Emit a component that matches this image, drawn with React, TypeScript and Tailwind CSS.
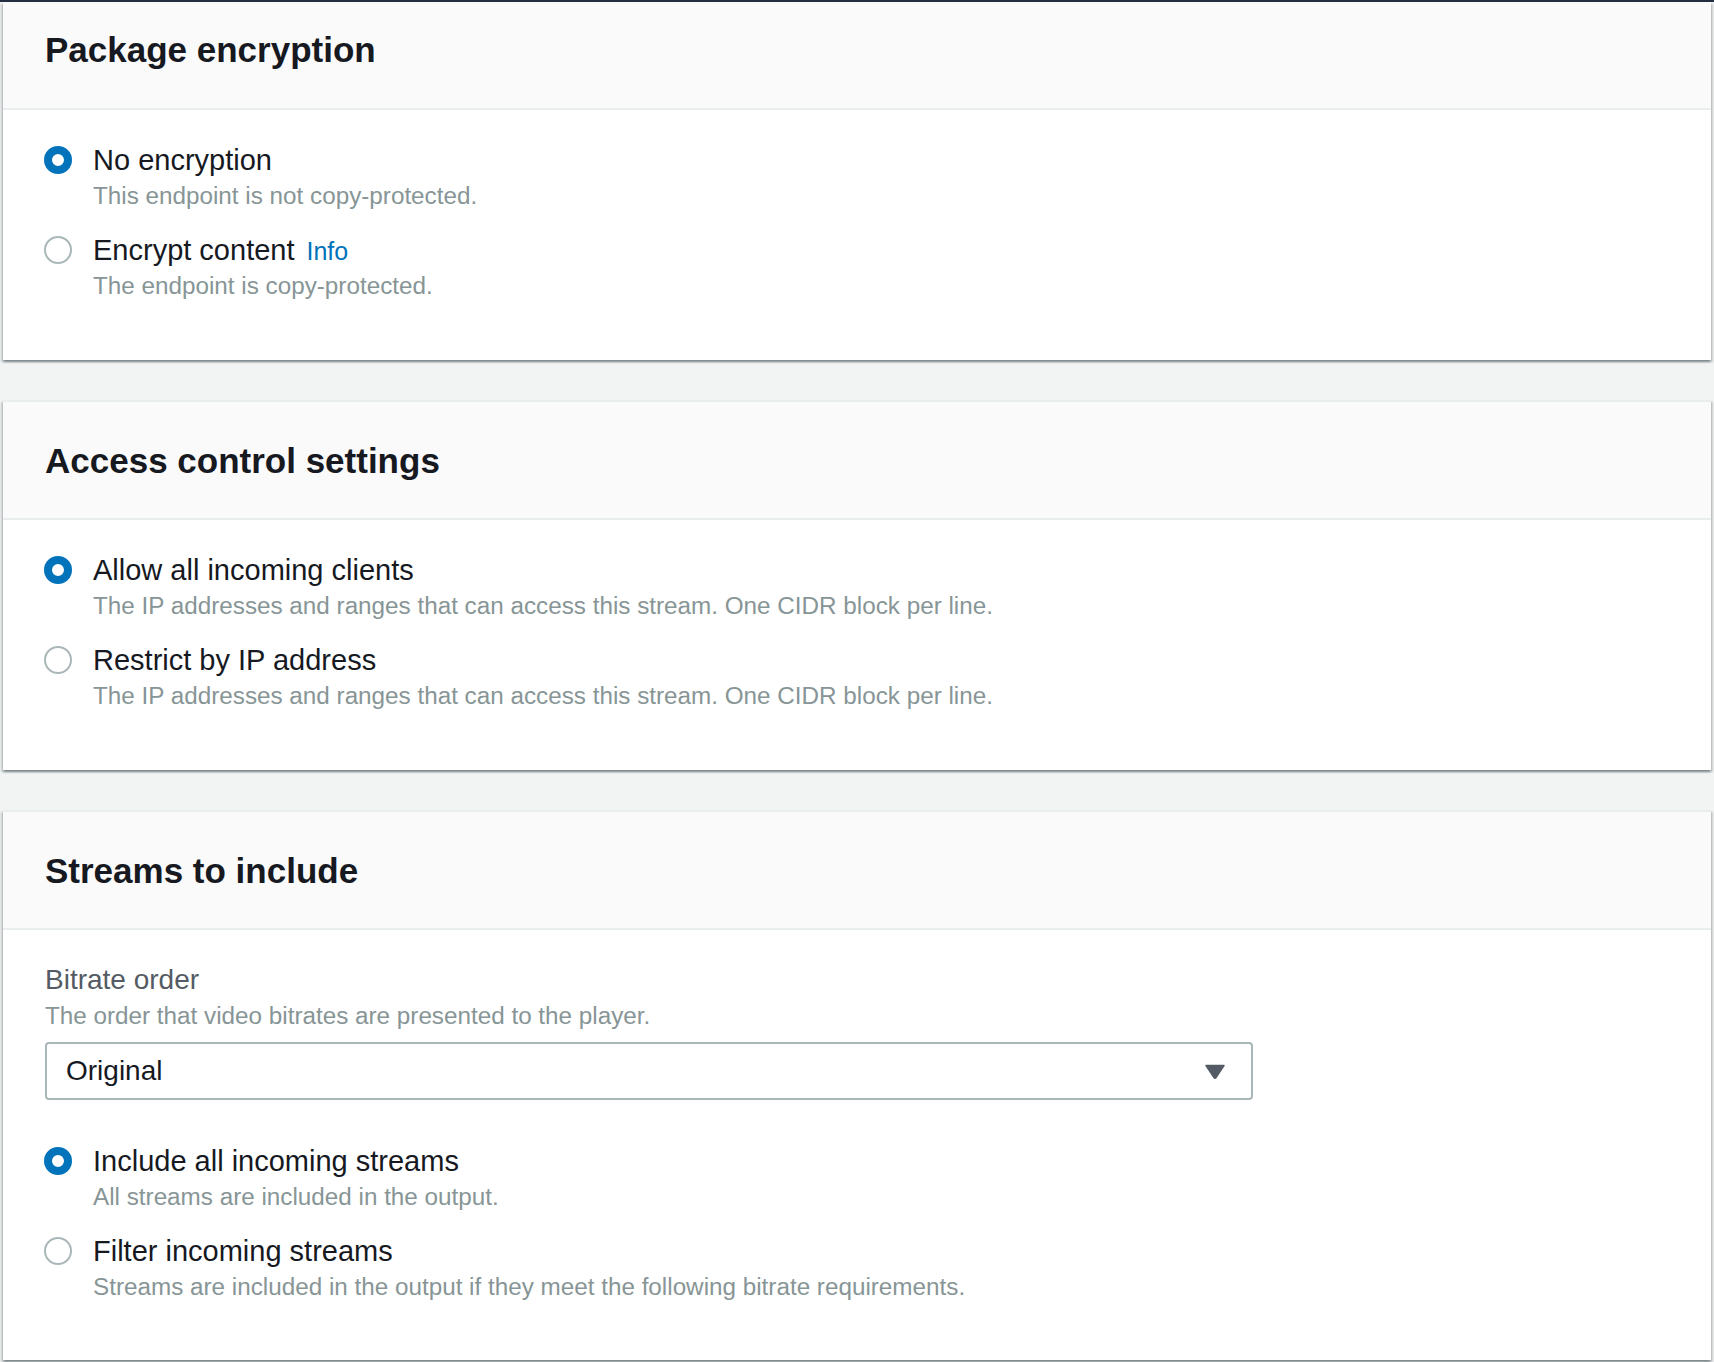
import React, { useState } from "react";

const font = { fontFamily: '"Liberation Sans", Arial, sans-serif' };

type Option = { value: string; label: string; description: string; info?: boolean };

function Radio({ checked }: { checked: boolean }) {
  return checked ? (
    <span className="mt-[6px] block h-[28px] w-[28px] shrink-0 rounded-full border-[8px] border-[#0073bb] bg-white" />
  ) : (
    <span className="mt-[6px] block h-[28px] w-[28px] shrink-0 rounded-full border-2 border-[#aab7b8] bg-white" />
  );
}

function RadioGroup({ options, initial }: { options: Option[]; initial: string }) {
  const [value, setValue] = useState(initial);
  return (
    <div className="flex flex-col gap-[18px]">
      {options.map((o) => (
        <label key={o.value} className="flex cursor-pointer items-start gap-[21px]" onClick={() => setValue(o.value)}>
          <Radio checked={value === o.value} />
          <div className="flex flex-col">
            <div className="flex h-[40px] items-baseline gap-[12px] text-[29px] leading-[40px] text-[#16191f]">
              <span>{o.label}</span>
              {o.info && <a className="text-[25px] text-[#0073bb]">Info</a>}
            </div>
            <div className="text-[24.25px] leading-[32px] text-[#879596]">{o.description}</div>
          </div>
        </label>
      ))}
    </div>
  );
}

function Card({ title, clipped, children }: { title: string; clipped?: boolean; children: React.ReactNode }) {
  return (
    <section
      className={
        "bg-white shadow-[0_2px_2px_0_rgba(0,28,36,0.3),2px_2px_2px_0_rgba(0,28,36,0.15),-2px_2px_2px_0_rgba(0,28,36,0.15)] " +
        (clipped ? "" : "border-t-2 border-[#eaeded]")
      }
    >
      <div
        className={
          "flex items-center border-b-2 border-[#eaeded] bg-[#fafafa] pl-[42px] " +
          (clipped ? "h-[108px] pb-[10px]" : "h-[118px] pt-[2px]")
        }
      >
        <h2 className="text-[35px] font-bold leading-[44px] text-[#16191f]">{title}</h2>
      </div>
      {children}
    </section>
  );
}

export default function App() {
  return (
    <div style={font} className="min-h-[1362px] bg-[#f2f3f3]">
      <div className="h-[2px] bg-[#232f3e]" />
      <div className="flex flex-col gap-[40px] px-[3px] pb-[2px]">
        <Card title="Package encryption" clipped>
          <div className="pl-[41px] pt-[30px] pb-[58px]">
            <RadioGroup
              initial="none"
              options={[
                { value: "none", label: "No encryption", description: "This endpoint is not copy-protected." },
                { value: "encrypt", label: "Encrypt content", description: "The endpoint is copy-protected.", info: true },
              ]}
            />
          </div>
        </Card>

        <Card title="Access control settings">
          <div className="pl-[41px] pt-[30px] pb-[58px]">
            <RadioGroup
              initial="all"
              options={[
                {
                  value: "all",
                  label: "Allow all incoming clients",
                  description: "The IP addresses and ranges that can access this stream. One CIDR block per line.",
                },
                {
                  value: "ip",
                  label: "Restrict by IP address",
                  description: "The IP addresses and ranges that can access this stream. One CIDR block per line.",
                },
              ]}
            />
          </div>
        </Card>

        <Card title="Streams to include">
          <div className="pl-[42px] pt-[30px] pb-[57px]">
            <div className="text-[28px] leading-[40px] text-[#545b64]">Bitrate order</div>
            <div className="text-[24.25px] leading-[32px] text-[#879596]">The order that video bitrates are presented to the player.</div>
            <div className="mt-[10px] flex h-[58px] w-[1208px] items-center justify-between rounded-[4px] border-2 border-[#aab7b8] bg-white pl-[19px] pr-[26px]">
              <span className="text-[28px] text-[#16191f]">Original</span>
              <svg width="20" height="15" viewBox="0 0 20 15">
                <path d="M1 1.5 H19 L11 13.5 Q10 15 9 13.5 Z" fill="#545b64" stroke="#545b64" strokeWidth="1.5" strokeLinejoin="round" />
              </svg>
            </div>
            <div className="mt-[41px] -ml-[1px]">
              <RadioGroup
                initial="all"
                options={[
                  { value: "all", label: "Include all incoming streams", description: "All streams are included in the output." },
                  {
                    value: "filter",
                    label: "Filter incoming streams",
                    description: "Streams are included in the output if they meet the following bitrate requirements.",
                  },
                ]}
              />
            </div>
          </div>
        </Card>
      </div>
    </div>
  );
}
